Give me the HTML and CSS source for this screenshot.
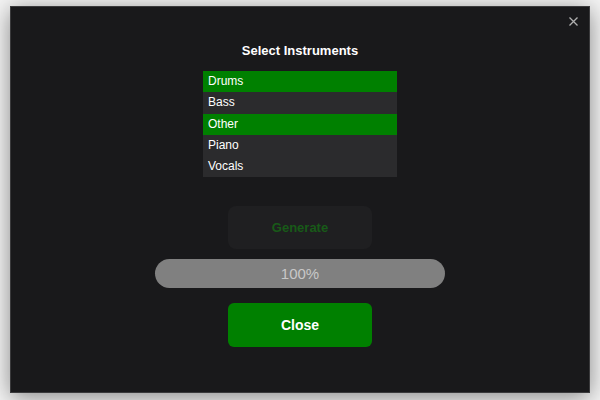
FILE: index.html
```html
<!DOCTYPE html>
<html>
<head>
<meta charset="utf-8">
<link rel="stylesheet" href="styles.css">
</head>
<body>
<div class="modal">
  <button class="close-x" aria-label="Close">
    <svg width="9" height="9" viewBox="0 0 9 9"><path d="M0.5 0.5L8.5 8.5M8.5 0.5L0.5 8.5" stroke="#b0b0b0" stroke-width="1.3" fill="none"/></svg>
  </button>
  <h2 class="title">Select Instruments</h2>
  <ul class="list">
    <li class="item selected">Drums</li>
    <li class="item">Bass</li>
    <li class="item selected">Other</li>
    <li class="item">Piano</li>
    <li class="item">Vocals</li>
  </ul>
  <button class="btn generate">Generate</button>
  <div class="progress">100%</div>
  <button class="btn close">Close</button>
</div>
</body>
</html>
```
FILE: styles.css
```css
html, body {
  margin: 0;
  padding: 0;
}
body {
  width: 600px;
  height: 400px;
  background: #f4f4f4;
  font-family: "Liberation Sans", Arial, sans-serif;
  padding-top: 6px;
  padding-left: 10px;
  box-sizing: border-box;
  overflow: hidden;
}
.modal {
  position: relative;
  width: 580px;
  height: 387px;
  box-sizing: border-box;
  background: #19191b;
  border: 1px solid #3a3a3c;
  box-shadow: 0 4px 22px rgba(0,0,0,0.45);
  display: flex;
  flex-direction: column;
  align-items: center;
  padding-top: 36px;
}
.close-x {
  position: absolute;
  top: 7px;
  right: 9px;
  width: 14px;
  height: 14px;
  padding: 0;
  border: 0;
  background: none;
  display: flex;
  align-items: center;
  justify-content: center;
}
.title {
  margin: 0;
  color: #ffffff;
  font-size: 13px;
  font-weight: bold;
  line-height: 15px;
  height: 15px;
}
.list {
  list-style: none;
  margin: 13px 0 0 0;
  padding: 0;
  width: 194px;
  background: #2b2b2d;
}
.item {
  height: 21.3px;
  line-height: 21px;
  padding-left: 5px;
  color: #ffffff;
  font-size: 12px;
}
.item.selected {
  background: #008000;
}
.btn {
  width: 144px;
  border: 0;
  font-family: "Liberation Sans", Arial, sans-serif;
  font-weight: bold;
  font-size: 13px;
}
.generate {
  margin-top: 29px;
  height: 43px;
  border-radius: 8px;
  background: #1f1f21;
  color: #185a18;
}
.progress {
  margin-top: 10px;
  width: 290px;
  height: 29px;
  border-radius: 15px;
  background: #808080;
  color: #c8c8c8;
  font-size: 15px;
  line-height: 29px;
  text-align: center;
}
.close {
  margin-top: 15px;
  height: 44px;
  border-radius: 6px;
  background: #008000;
  color: #ffffff;
  font-size: 14px;
}
```
